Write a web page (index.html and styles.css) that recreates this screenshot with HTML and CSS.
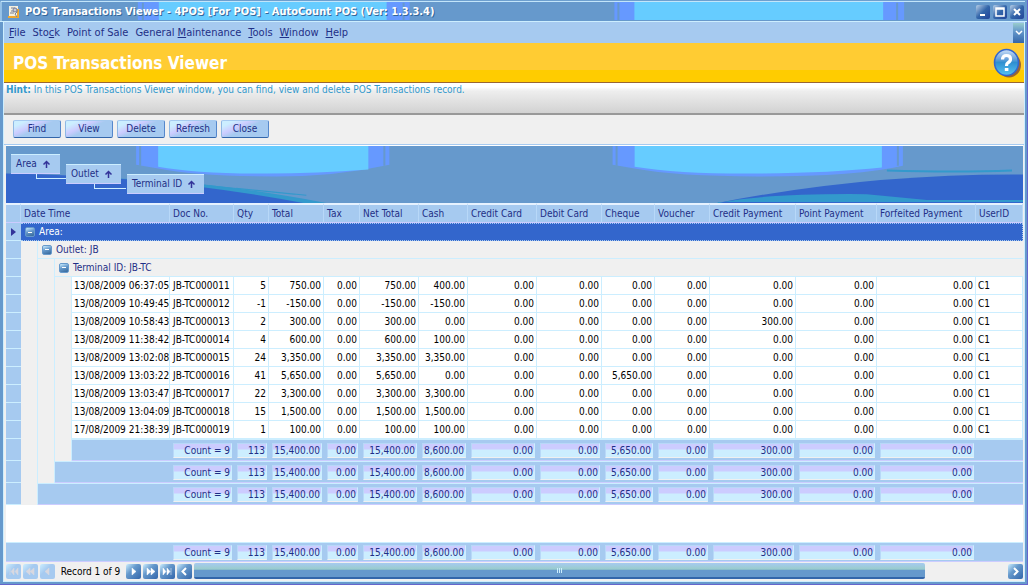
FILE: index.html
```html
<!DOCTYPE html>
<html lang="en">
<head>
<meta charset="utf-8">
<title>POS Transactions Viewer</title>
<link rel="stylesheet" href="styles.css">
</head>
<body>
<div class="window">
  <header class="titlebar">
    <svg class="titlebar-art" viewBox="0 0 1028 22" preserveAspectRatio="none" aria-hidden="true">
      <rect width="1028" height="22" fill="#6699cc"/>
      <path d="M138 2H410V21H138z M615 2H905V21H615z" fill="#6699ff"/>
      <path d="M159 2H387V21H159z M635 2H884V21H635z" fill="#66ccff"/>
      <path d="M143 3V21 M404 3V21 M619 3V21 M898 3V21" stroke="#6699cc" stroke-width="2"/>
      <path d="M1 22V1.500H1026" fill="none" stroke="#cceeff"/>
    </svg>
    <svg class="app-icon" viewBox="0 0 12 14" aria-hidden="true">
      <path d="M1 1h9v3h1v9H1z" fill="#f4f0e0"/>
      <path d="M0 11h11v2H0z M9 4h2v8H9z" fill="#f0a830"/>
      <path d="M3 3h4l2 2v2L7 9l2 3M3 6h3M2 8h4" fill="none" stroke="#7a7f94"/>
      <circle cx="7" cy="5" r="2" fill="#c9ccd8" stroke="#7a7f94"/>
    </svg>
    <span class="titlebar-text">POS Transactions Viewer - 4POS [For POS] - AutoCount POS (Ver: 1.3.3.4)</span>
    <div class="window-buttons">
      <button aria-label="Minimize"><svg viewBox="0 0 14 14"><path d="M4 10h5" stroke="#fff" stroke-width="2"/></svg></button>
      <button aria-label="Maximize"><svg viewBox="0 0 14 14"><path d="M3 4h8M3 3h8v8H3z" fill="none" stroke="#fff" stroke-width="1.5"/></svg></button>
      <button aria-label="Close"><svg viewBox="0 0 14 14"><path d="M4 4l6 6M10 4l-6 6" stroke="#fff" stroke-width="2"/></svg></button>
    </div>
  </header>
  <div class="frame">
    <nav class="menubar">
      <button><u>F</u>ile</button>
      <button>Sto<u>c</u>k</button>
      <button>Point of Sale</button>
      <button>General <u>M</u>aintenance</button>
      <button><u>T</u>ools</button>
      <button><u>W</u>indow</button>
      <button><u>H</u>elp</button>
      <button class="menu-more" aria-label="More"><svg viewBox="0 0 11 20"><path d="M3 8l3 3 3-3" fill="none" stroke="#fff" stroke-width="1.5"/></svg></button>
    </nav>
    <div class="banner">
      <h1>POS Transactions Viewer</h1>
      <button class="help" aria-label="Help">
        <svg viewBox="0 0 29 30">
          <defs>
            <linearGradient id="ball" x1="0" y1="0" x2="0" y2="1">
              <stop offset="0" stop-color="#cce0f8"/><stop offset=".35" stop-color="#6fa4dc"/><stop offset=".5" stop-color="#2f8fd0"/><stop offset="1" stop-color="#55c4f4"/>
            </linearGradient>
          </defs>
          <ellipse cx="16" cy="17" rx="12" ry="12.500" fill="#996633"/>
          <ellipse cx="13.500" cy="14.500" rx="12" ry="13" fill="url(#ball)" stroke="#3366cc" stroke-width="1.500"/>
          <path d="M9.500 11.500q0-4 4-4t4 3.500q0 2.500-2.500 3.700-1.500.8-1.500 3.300" fill="none" stroke="#fff" stroke-width="3.200"/>
          <path d="M11.800 20h3.600v3h-3.600z" fill="#fff"/>
        </svg>
      </button>
    </div>
    <p class="hint"><b>Hint:</b> In this POS Transactions Viewer window, you can find, view and delete POS Transactions record.</p>
    <div class="toolbar">
      <button>Find</button>
      <button>View</button>
      <button>Delete</button>
      <button>Refresh</button>
      <button>Close</button>
    </div>
    <div class="grid">
      <div class="group-panel">
        <svg class="group-art" viewBox="0 0 1016 58" preserveAspectRatio="none" aria-hidden="true">
          <rect width="1016" height="58" fill="#6699cc"/>
          <path d="M130 0H383V19Q330 31 270 31Q190 31 152 23L130 19z M606 0H896V20Q850 31 750 31Q670 31 628 23L606 19z" fill="#6699ff"/>
          <path d="M152 0H362V24Q310 28 260 28Q190 28 152 21z M628 0H875V22Q820 28 740 28Q670 28 628 21z" fill="#66ccff"/>
          <path d="M134 0V20 M378 0V20 M610 0V20 M891 0V20" stroke="#6699cc" stroke-width="2"/>
          <path d="M110 33Q200 35 320 58H0V33z" fill="#3399cc"/>
          <path d="M0 28Q150 30 297 58H0z" fill="#3366cc"/>
          <path d="M198 40l90 9M230 43l70 7" stroke="#3399cc"/>
          <path d="M711 58Q860 28 1016 29V58z" fill="#3366cc"/>
          <path d="M711 58Q760 48 860 49L920 55H1016V57H711z" fill="#3399cc"/>
          <path d="M880 25Q950 27 1005 25" fill="none" stroke="#3399cc" stroke-width="2"/>
        </svg>
        <div class="group-path">
          <button class="chip chip-area">Area <svg viewBox="0 0 9 8"><path d="M4.500 8V1.500M1.500 4.500l3-3 3 3" /></svg></button>
          <button class="chip chip-outlet">Outlet <svg viewBox="0 0 9 8"><path d="M4.500 8V1.500M1.500 4.500l3-3 3 3" /></svg></button>
          <button class="chip chip-terminal">Terminal ID <svg viewBox="0 0 9 8"><path d="M4.500 8V1.500M1.500 4.500l3-3 3 3" /></svg></button>
        </div>
      </div>
      <table class="records" id="records">
        <thead>
          <tr><th></th><th colspan="4">Date Time</th><th>Doc No.</th><th>Qty</th><th>Total</th><th>Tax</th><th>Net Total</th><th>Cash</th><th>Credit Card</th><th>Debit Card</th><th>Cheque</th><th>Voucher</th><th>Credit Payment</th><th>Point Payment</th><th>Forfeited Payment</th><th>UserID</th></tr>
        </thead>
        <tbody>
          <tr class="group group-area"><td class="row-head"><svg viewBox="0 0 5 8"><path d="M0 0l5 4-5 4z" fill="#339"/></svg></td><td colspan="18"><button class="toggle" aria-label="Collapse"></button>Area:</td></tr>
          <tr class="group"><td class="row-head"></td><td class="indent"></td><td colspan="17"><button class="toggle" aria-label="Collapse"></button>Outlet: JB</td></tr>
          <tr class="group"><td class="row-head"></td><td class="indent"></td><td class="indent"></td><td colspan="16"><button class="toggle" aria-label="Collapse"></button>Terminal ID: JB-TC</td></tr>
        </tbody>
      </table>
      <div class="spacer"></div>
      <table class="records totals" id="totals"></table>
      <div class="navigator">
        <button disabled aria-label="First"><svg viewBox="0 0 15 15"><path d="M4 4v7M8 4v7L5 7.500zM12 4v7L9 7.500z"/></svg></button>
        <button disabled aria-label="Previous page"><svg viewBox="0 0 15 15"><path d="M7 4v7L3 7.500zM11 4v7L7 7.500z"/></svg></button>
        <button disabled aria-label="Previous"><svg viewBox="0 0 15 15"><path d="M9 4v7L5 7.500z"/></svg></button>
        <span class="position">Record 1 of 9</span>
        <button aria-label="Next"><svg viewBox="0 0 15 15"><path d="M6 4v7l4-3.500z"/></svg></button>
        <button aria-label="Next page"><svg viewBox="0 0 15 15"><path d="M4 4v7l4-3.500zM8 4v7l4-3.500z"/></svg></button>
        <button aria-label="Last"><svg viewBox="0 0 15 15"><path d="M3 4v7l3-3.500zM7 4v7l3-3.500zM11 4v7"/></svg></button>
        <button class="scroll-button" aria-label="Scroll left"><svg viewBox="0 0 15 15"><path class="chevron" d="M9 4L5.500 7.500 9 11"/></svg></button>
        <div class="track"><div class="thumb"><i></i><i></i><i></i></div></div>
        <button class="scroll-button" aria-label="Scroll right"><svg viewBox="0 0 15 15"><path class="chevron" d="M6 4l3.500 3.500L6 11"/></svg></button>
      </div>
    </div>
  </div>
</div>
<script src="grid.js"></script>
</body>
</html>
```

FILE: styles.css
```css
* { box-sizing: border-box; }

body {
  margin: 0;
  font-family: "DejaVu Sans Condensed", "DejaVu Sans", sans-serif;
  font-size: 10px;
  line-height: 14px;
  color: #1f2f86;
}

button {
  margin: 0;
  padding: 0;
  border: 0;
  background: none;
  font: inherit;
  color: inherit;
}

svg { display: block; }

.window {
  display: flex;
  flex-direction: column;
  min-height: 100vh;
  border-right: 1px solid #6666cc;
  border-bottom: 1px solid #6666cc;
  background: #6699cc;
}

.titlebar {
  position: relative;
  display: flex;
  align-items: center;
  gap: 5px;
  height: 22px;
  padding: 2px 3px 0 8px;
  border-bottom: 1px solid #cceeff;
}

.titlebar-art {
  position: absolute;
  inset: 0;
  width: 100%;
  height: 100%;
}

.app-icon { position: relative; width: 12px; height: 14px; }

.titlebar-text {
  position: relative;
  font-size: 11px;
  font-weight: bold;
  color: #fff;
  text-shadow: 1px 1px 0 #336699;
  white-space: nowrap;
}

.window-buttons {
  position: relative;
  display: flex;
  gap: 3px;
  margin-left: auto;
}

.window-buttons button,
.navigator button {
  width: 15px;
  height: 15px;
  border-radius: 2px;
  background: linear-gradient(135deg, #cceeff, #6699cc 40%, #3366aa);
}

.window-buttons button {
  width: 14px;
  height: 14px;
  background: linear-gradient(135deg, #b8d0e8, #3366aa 50%, #224499);
}

.frame {
  display: flex;
  flex: 1;
  flex-direction: column;
  margin: 0 2px 2px 3px;
  border: solid #cceeff;
  border-width: 0 1px 1px;
  background: #f0f0f0;
}

.menubar {
  display: flex;
  height: 21px;
  padding: 0 0 0 5px;
  gap: 7px;
  align-items: center;
  background: #a6caf0;
  font-size: 11px;
}

.menu-more {
  width: 11px;
  height: 20px;
  margin-left: auto;
  background: linear-gradient(#99cccc, #6699cc 40%, #3366aa);
}

.banner {
  display: flex;
  align-items: center;
  justify-content: space-between;
  height: 40px;
  padding: 0 2px 0 9px;
  border-bottom: 1px solid #996633;
  background: linear-gradient(#ffcc33 27px, #ffcc00 27px);
}

.banner h1 {
  margin: 0;
  font-size: 17px;
  line-height: 20px;
  color: #fff;
}

.help svg { width: 29px; height: 30px; }

.hint {
  height: 32px;
  margin: 0;
  padding: 0 2px;
  border-bottom: 2px solid #999;
  background: linear-gradient(#fff 4px, #eee 8px, #d2d2d2);
  color: #3399cc;
}

.toolbar {
  display: flex;
  gap: 4px;
  padding: 5px 9px 6px;
  border-bottom: 1px solid #a6caf0;
}

.toolbar button {
  width: 48px;
  height: 18px;
  border: 1px solid;
  border-color: #a6caf0 #5588cc #3366aa #8fb8e4;
  border-radius: 2px;
  background: linear-gradient(155deg, #cceeff 15%, #ccccff 35%, #a6caf0 50%);
}

.grid {
  display: flex;
  flex: 1;
  flex-direction: column;
  margin: 0 1px 0 2px;
  background: #fff;
}

.group-panel {
  position: relative;
  height: 58px;
  border-top: 1px solid #fff;
}

.group-art {
  position: absolute;
  inset: 0;
  width: 100%;
  height: 100%;
}

.group-path {
  position: relative;
  display: flex;
  gap: 6px;
  padding: 8px 5px;
}

.chip {
  position: relative;
  display: flex;
  flex: none;
  align-items: center;
  gap: 5px;
  height: 20px;
  padding: 0 5px;
  border-top: 1px solid #cceeff;
  border-bottom: 1px solid #ccccff;
  background: #a6caf0;
}

.chip svg {
  width: 9px;
  height: 8px;
  fill: none;
  stroke: #339;
  stroke-width: 1.5;
}

.chip-area { width: 49px; }
.chip-outlet { width: 55px; margin-top: 10px; }
.chip-terminal { width: 77px; margin-top: 20px; }

.chip-area::after,
.chip-outlet::after {
  content: "";
  position: absolute;
  top: 19px;
  left: 50%;
  width: 31px;
  height: 4px;
  border: solid #cceeff;
  border-width: 0 0 1px 1px;
}

.records {
  width: 100%;
  table-layout: fixed;
  border-collapse: separate;
  border-spacing: 0;
}

.records td, .records th {
  height: 18px;
  padding: 0 2px;
  overflow: hidden;
  font-weight: normal;
  white-space: nowrap;
}

.records th {
  height: 20px;
  padding: 0 3px;
  border-top: 2px solid #e6f2ff;
  border-bottom: 1px solid #ccccff;
  border-right: 1px solid #b8d8f8;
  background: #a6caf0;
  text-align: left;
}

.records .row-head {
  border-bottom: 1px solid #cceeff;
  background: #a6caf0;
}

.row-head svg { width: 5px; height: 8px; margin: 0 auto; }

.records .indent {
  border-right: 1px solid #cceeff;
  background: #f0f0f0;
}

.records .group td:last-child {
  border-bottom: 1px solid #cceeff;
  padding-left: 4px;
  background: #f0f0f0;
}

.records .group-area td:last-child {
  border: 1px dotted #a6caf0;
  border-left: 0;
  background: #3366cc;
  color: #fff;
}

.toggle {
  display: inline-block;
  width: 10px;
  height: 10px;
  margin-right: 4px;
  border: 1px solid #6699cc;
  border-radius: 2px;
  background: linear-gradient(#fff, #fff) center / 4px 1px no-repeat, linear-gradient(160deg, #cceeff, #6699cc 45%, #336699);
  vertical-align: -1px;
}

.records .value {
  border-right: 1px solid #cceeff;
  border-bottom: 1px solid #cceeff;
  background: #fff;
  color: #000;
}

.records .value.doc { padding-left: 3px; }

.number { text-align: right; }

.records .summary td { height: 22px; }

.records .total {
  padding: 0 2px 0 3px;
  border-top: 1px solid #cceeff;
  border-bottom: 1px solid #ccccff;
  background: #a6caf0;
}

.total span {
  display: block;
  height: 15px;
  padding-right: 1px;
  border: 1px solid #cceeff;
  border-color: #b8d8f8 #cceeff #f0f0f0 #b8d8f8;
  background: linear-gradient(#ccccff 5px, #cceeff 6px);
  line-height: 13px;
  text-align: right;
}

.spacer { flex: 1; }

.records.totals td { height: 20px; }

.navigator {
  display: flex;
  gap: 2px;
  align-items: center;
  height: 19px;
  background: #f0f0f0;
}

.navigator svg {
  width: 15px;
  height: 15px;
  fill: #fff;
  stroke: #fff;
  stroke-width: 0.5;
}

.navigator button:disabled { background: linear-gradient(135deg, #cceeff, #a6caf0 40%); }
.navigator button:disabled svg { fill: #d8d8e0; stroke: #d8d8e0; }
.navigator .chevron { fill: none; stroke-width: 2; }

.position {
  width: 67px;
  text-align: center;
  color: #000;
  white-space: nowrap;
}

.track { flex: 1; height: 17px; }

.thumb {
  display: flex;
  justify-content: center;
  align-items: center;
  gap: 1px;
  width: 90%;
  height: 16px;
  border-radius: 2px;
  border-bottom: 2px solid #3366aa;
  background: linear-gradient(#a6caf0, #99cccc 45%, #6699cc 50%);
}

.thumb i { width: 1px; height: 5px; background: #cceeff; }

.c-head { width: 15px; }
.c-in1 { width: 17px; }
.c-in { width: 17px; }
.c-date { width: 98px; }
.c-doc { width: 64px; }
.c-qty { width: 35px; }
.c-total { width: 55px; }
.c-tax { width: 36px; }
.c-net { width: 59px; }
.c-cash { width: 49px; }
.c-credit { width: 69px; }
.c-debit { width: 65px; }
.c-cheque { width: 53px; }
.c-voucher { width: 55px; }
.c-cpay { width: 86px; }
.c-ppay { width: 81px; }
.c-fpay { width: 99px; }
```

FILE: grid.js
```js
const columns = ["head", "in1", "in", "in", "date", "doc", "qty", "total", "tax", "net", "cash", "credit", "debit", "cheque", "voucher", "cpay", "ppay", "fpay", "user"];
const colgroup = "<colgroup>" + columns.map(c => `<col class="c-${c}">`).join("") + "</colgroup>";

// date, doc suffix, qty, total, cash, cheque, credit payment
const sales = [
  ["13/08/2009 06:37:05", 11, "5", "750.00", "400.00", "0.00", "0.00"],
  ["13/08/2009 10:49:45", 12, "-1", "-150.00", "-150.00", "0.00", "0.00"],
  ["13/08/2009 10:58:43", 13, "2", "300.00", "0.00", "0.00", "300.00"],
  ["13/08/2009 11:38:42", 14, "4", "600.00", "100.00", "0.00", "0.00"],
  ["13/08/2009 13:02:08", 15, "24", "3,350.00", "3,350.00", "0.00", "0.00"],
  ["13/08/2009 13:03:22", 16, "41", "5,650.00", "0.00", "5,650.00", "0.00"],
  ["13/08/2009 13:03:47", 17, "22", "3,300.00", "3,300.00", "0.00", "0.00"],
  ["13/08/2009 13:04:09", 18, "15", "1,500.00", "1,500.00", "0.00", "0.00"],
  ["17/08/2009 21:38:39", 19, "1", "100.00", "100.00", "0.00", "0.00"]
];
const zero = "0.00";
const indent = n => '<td class="indent"></td>'.repeat(n);

const saleRow = ([date, doc, qty, total, cash, cheque, credit]) => {
  const numbers = [qty, total, zero, total, cash, zero, zero, cheque, zero, credit, zero, zero];
  return `<tr><td class="row-head"></td>${indent(3)}<td class="value">${date}</td><td class="value doc">JB-TC0000${doc}</td>` +
    numbers.map(n => `<td class="value number">${n}</td>`).join("") + '<td class="value">C1</td></tr>';
};

const sums = ["Count = 9", "113", "15,400.00", zero, "15,400.00", "8,600.00", zero, zero, "5,650.00", zero, "300.00", zero, zero];
const sumCells = sums.map(s => `<td class="total"><span>${s}</span></td>`).join("") + '<td class="total"></td>';
const summaryRow = depth =>
  `<tr class="summary"><td class="row-head"></td>${indent(depth)}<td class="total" colspan="${4 - depth}"></td>${sumCells}</tr>`;

const records = document.getElementById("records");
records.insertAdjacentHTML("afterbegin", colgroup);
records.tBodies[0].insertAdjacentHTML("beforeend", sales.map(saleRow).join("") + [3, 2, 1].map(summaryRow).join(""));
document.getElementById("totals").innerHTML = `${colgroup}<tbody><tr><td class="total" colspan="5"></td>${sumCells}</tr></tbody>`;
```
